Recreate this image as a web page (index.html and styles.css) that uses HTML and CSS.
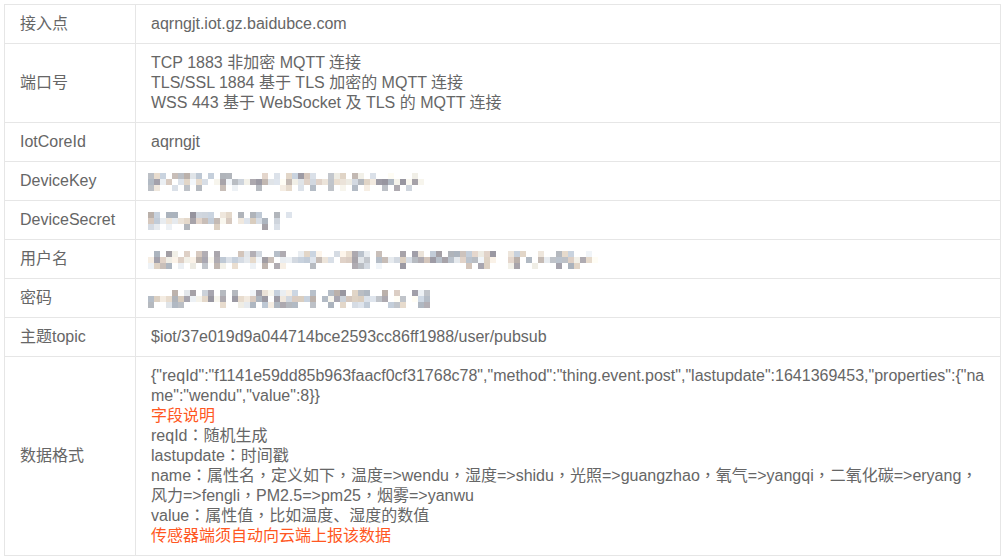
FILE: index.html
```html
<!DOCTYPE html>
<html lang="zh-CN">
<head>
    <meta charset="UTF-8">
    <meta name="viewport" content="width=device-width, initial-scale=1.0">
    <title>设备接入信息</title>
    <link rel="stylesheet" href="styles.css">
</head>
<body>
    <table class="info-table">
        <colgroup>
            <col class="col-label">
            <col>
        </colgroup>
        <tbody>
            <tr>
                <td>接入点</td>
                <td>aqrngjt.iot.gz.baidubce.com</td>
            </tr>
            <tr>
                <td>端口号</td>
                <td>
                    TCP 1883 非加密 MQTT 连接<br>
                    TLS/SSL 1884 基于 TLS 加密的 MQTT 连接<br>
                    WSS 443 基于 WebSocket 及 TLS 的 MQTT 连接
                </td>
            </tr>
            <tr>
                <td>IotCoreId</td>
                <td>aqrngjt</td>
            </tr>
            <tr>
                <td>DeviceKey</td>
                <td><span class="mosaic" data-w="278" data-seed="11"></span></td>
            </tr>
            <tr>
                <td>DeviceSecret</td>
                <td><span class="mosaic" data-w="146" data-seed="27" data-gaps="14,20"></span></td>
            </tr>
            <tr>
                <td>用户名</td>
                <td><span class="mosaic" data-w="452" data-seed="5" data-gaps="58,59"></span></td>
            </tr>
            <tr>
                <td>密码</td>
                <td><span class="mosaic" data-w="284" data-seed="42" data-gaps="43"></span></td>
            </tr>
            <tr>
                <td>主题topic</td>
                <td>$iot/37e019d9a044714bce2593cc86ff1988/user/pubsub</td>
            </tr>
            <tr>
                <td>数据格式</td>
                <td class="data-format">
                    <div class="json">{"reqId":"f1141e59dd85b963faacf0cf31768c78","method":"thing.event.post","lastupdate":1641369453,"properties":{"name":"wendu","value":8}}</div>
                    <div class="note">字段说明</div>
                    <div>reqId<span class="pc" lang="zh-TW">：</span>随机生成</div>
                    <div>lastupdate<span class="pc" lang="zh-TW">：</span>时间戳</div>
                    <div>name<span class="pc" lang="zh-TW">：</span>属性名<span class="pc" lang="zh-TW">，</span>定义如下<span class="pc" lang="zh-TW">，</span>温度=&gt;wendu<span class="pc" lang="zh-TW">，</span>湿度=&gt;shidu<span class="pc" lang="zh-TW">，</span>光照=&gt;guangzhao<span class="pc" lang="zh-TW">，</span>氧气=&gt;yangqi<span class="pc" lang="zh-TW">，</span>二氧化碳=&gt;eryang<span class="pc" lang="zh-TW">，</span>风力=&gt;fengli<span class="pc" lang="zh-TW">，</span>PM2.5=&gt;pm25<span class="pc" lang="zh-TW">，</span>烟雾=&gt;yanwu</div>
                    <div>value<span class="pc" lang="zh-TW">：</span>属性值<span class="pc" lang="zh-TW">，</span>比如温度、湿度的数值</div>
                    <div class="note">传感器端须自动向云端上报该数据</div>
                </td>
            </tr>
        </tbody>
    </table>

    <script src="script.js"></script>
</body>
</html>
```

FILE: styles.css
```css
body {
    margin: 4px;
    font-family: "Liberation Sans", Arial, "Noto Sans CJK SC", sans-serif;
    font-size: 16px;
    color: #666;
    background-color: #fff;
}
.info-table {
    width: 100%;
    border-collapse: collapse;
    border-spacing: 0;
    background-color: #fff;
}
.col-label {
    width: 131px;
}
.info-table td {
    border: 1px solid #e6e6e6;
    padding: 9px 15px;
    line-height: 20px;
    min-height: 20px;
    vertical-align: middle;
}
.data-format .json {
    word-break: break-all;
}
/* full-width colon / comma drawn centred */
.pc {
    font-family: "Noto Sans CJK TC", sans-serif;
    line-height: 1;
}
.note {
    color: #FF5722;
}
.mosaic {
    display: inline-block;
    vertical-align: middle;
    height: 18px;
    margin-left: -3px;
}
.mosaic svg {
    display: block;
}
```

FILE: script.js
```js
// pixelated placeholder for hidden credentials
function mulberry32(a) {
    return function () {
        a |= 0;
        a = a + 0x6D2B79F5 | 0;
        let t = Math.imul(a ^ a >>> 15, 1 | a);
        t = t + Math.imul(t ^ t >>> 7, 61 | t) ^ t;
        return ((t ^ t >>> 14) >>> 0) / 4294967296;
    };
}

const palette = [
    [196, 186, 180], [214, 220, 228], [244, 236, 226], [170, 166, 172],
    [200, 210, 222], [226, 214, 200], [186, 190, 196], [234, 238, 242],
    [160, 158, 168], [220, 206, 196], [178, 186, 196], [246, 244, 236]
];

document.querySelectorAll('.mosaic').forEach(function (el) {
    const width = parseInt(el.dataset.w, 10);
    const rand = mulberry32(parseInt(el.dataset.seed, 10));
    const gaps = (el.dataset.gaps || '').split(',').filter(Boolean).map(Number);
    const size = 6;
    const cols = Math.floor(width / size);
    const chance = [0.55, 0.92, 0.35];
    let rects = '';

    for (let c = 0; c < cols; c++) {
        if (gaps.indexOf(c) !== -1) continue;
        for (let r = 0; r < 3; r++) {
            if (rand() > chance[r]) continue;
            const p = palette[Math.floor(rand() * palette.length)];
            const shift = Math.floor(rand() * 20) - 10;
            const col = 'rgb(' + p.map(v => Math.max(0, Math.min(255, v + shift))).join(',') + ')';
            rects += '<rect x="' + c * size + '" y="' + r * size + '" width="' + size + '" height="' + size + '" fill="' + col + '"/>';
        }
    }

    el.innerHTML = '<svg width="' + cols * size + '" height="18" viewBox="0 0 ' + cols * size + ' 18">' + rects + '</svg>';
});
```
